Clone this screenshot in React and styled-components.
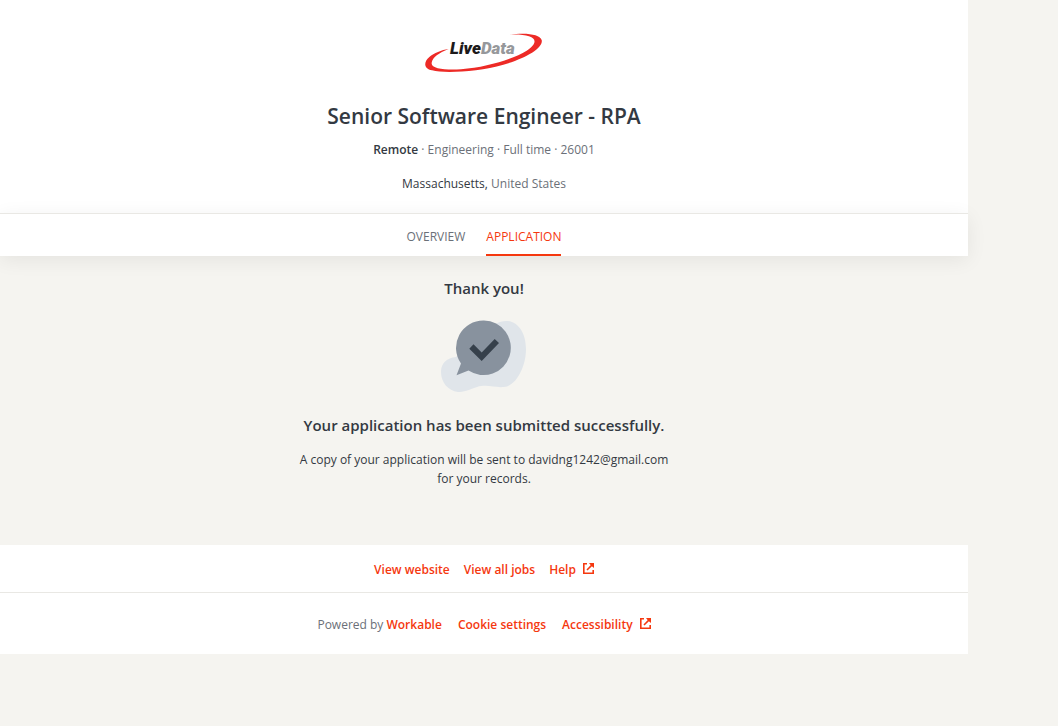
import React from 'react';
import styled, {createGlobalStyle, css} from 'styled-components';

const colors = {
    page: '#f5f4f0',
    surface: '#ffffff',
    text: '#333942',
    muted: '#6b7078',
    accent: '#f5380f',
    line: '#e9e8e4'
};

const GlobalStyle = createGlobalStyle`
    * {
        box-sizing: border-box;
    }

    body {
        margin: 0;
        background: ${colors.page};
        color: ${colors.text};
        font-family: "Segoe UI", "Open Sans", "Noto Sans", sans-serif;
        font-size: 12px;
        line-height: 19px;
    }
`;

const Page = styled.div`
    padding-right: 90px;
    text-align: center;
`;

const Header = styled.header`
    display: flex;
    flex-direction: column;
    align-items: center;
    padding: 31px 16px 20px;
    background: ${colors.surface};
`;

const JobTitle = styled.h1`
    margin: 28px 0 0;
    font-size: 21px;
    font-weight: 600;
    line-height: 30px;
`;

const Meta = styled.p`
    margin: ${props => props.$spaced ? '15px' : '9px'} 0 0;
    color: ${colors.muted};

    strong {
        color: ${colors.text};
        font-weight: 600;
    }

    span {
        color: ${colors.text};
    }
`;

const Tabs = styled.nav`
    position: relative;
    display: flex;
    justify-content: center;
    gap: 21px;
    background: ${colors.surface};
    border-top: 1px solid ${colors.line};
    box-shadow: 0 4px 20px rgba(0, 0, 0, 0.07);
`;

const Tab = styled.a`
    padding: 13px 0 8px;
    border-bottom: 2px solid transparent;
    color: ${colors.muted};
    font-weight: 500;
    text-decoration: none;
    text-transform: uppercase;

    ${props => props.$active && css`
        color: ${colors.accent};
        border-bottom-color: ${colors.accent};
    `}
`;

const Confirmation = styled.main`
    display: flex;
    flex-direction: column;
    align-items: center;
    padding: 22px 16px 57px;
`;

const Heading = styled.h2`
    margin: 0;
    font-size: 15px;
    font-weight: 600;
    line-height: 20px;
`;

const Message = styled.p`
    max-width: 376px;
    margin: 15px 0 0;
`;

const Bubble = styled.svg`
    width: 86px;
    height: 73px;
    margin: 22px 0;
`;

const FooterRow = styled.div`
    display: flex;
    justify-content: center;
    gap: ${props => props.$last ? '16px' : '14px'};
    padding: ${props => props.$last ? '22px 16px 20px' : '15px 16px 13px'};
    background: ${colors.surface};
    color: ${colors.muted};

    & + & {
        border-top: 1px solid ${colors.line};
    }
`;

const FooterLink = styled.a`
    color: ${colors.accent};
    font-weight: 600;
    text-decoration: none;

    svg {
        margin-left: 7px;
    }
`;

const Logo = () => (
    <svg width="118" height="42" viewBox="45 33 354 126" role="img" aria-label="LiveData">
        <path
            fill="#ed2a26"
            d="M298 44C350 37 389 43 395 60C401 83 348 115 280 134C205 155 105 161 66 151C41 145 40 127 58 111C72 99 94 90 116 87C86 99 68 112 65 128C62 147 104 150 153 148C230 142 308 118 350 92C378 73 382 57 357 49C343 44 322 43 298 44Z"
        />
        <text
            x="120"
            y="103"
            fontFamily="Roboto, 'Liberation Sans', sans-serif"
            fontSize="51"
            fontWeight="900"
            fontStyle="italic"
        >
            <tspan fill="#1c1a1b">Live</tspan>
            <tspan fill="#96989b">Data</tspan>
        </text>
    </svg>
);

const ExternalIcon = () => (
    <svg width="11" height="11" viewBox="0 0 11 11" fill="none" stroke="currentColor" strokeWidth="1.6" aria-hidden="true">
        <path d="M4 .8H.8V10.2H10.2V7"/>
        <path d="M4 7L9.6 1.4"/>
        <path fill="currentColor" stroke="none" d="M6 0H11V5L9.2 3.6L7.4 1.8Z"/>
    </svg>
);

const SuccessBubble = () => (
    <Bubble viewBox="0 0 86 73" aria-hidden="true">
        <path
            fill="#e0e5ea"
            d="M65 1C77 1 85 13 85 29C85 47 75 66 63 67C54 68 46 64 36 67C28 70 22 72 17 72C7 71 0 62 0 52C0 43 6 38 15 37L45 10C52 5 58 1 65 1Z"
        />
        <path
            fill="#88929e"
            d="M43 .5A27.3 27.3 0 1 1 27.5 50.6L15.5 55.3L20 43.5A27.3 27.3 0 0 1 43 .5Z"
        />
        <path fill="#36404b" d="M28.3 28.7L32.5 24.3L40.7 32.6L53.7 19L58 23L40.7 41Z"/>
    </Bubble>
);

export default function App() {
    return (
        <>
            <GlobalStyle/>
            <Page>
                <Header>
                    <Logo/>
                    <JobTitle>Senior Software Engineer - RPA</JobTitle>
                    <Meta><strong>Remote</strong> · Engineering · Full time · 26001</Meta>
                    <Meta $spaced><span>Massachusetts,</span> United States</Meta>
                </Header>
                <Tabs>
                    <Tab href="#overview">Overview</Tab>
                    <Tab href="#application" $active aria-current="page">Application</Tab>
                </Tabs>
                <Confirmation>
                    <Heading>Thank you!</Heading>
                    <SuccessBubble/>
                    <Heading>Your application has been submitted successfully.</Heading>
                    <Message>
                        A copy of your application will be sent to davidng1242@gmail.com for your records.
                    </Message>
                </Confirmation>
                <footer>
                    <FooterRow>
                        <FooterLink href="#website">View website</FooterLink>
                        <FooterLink href="#jobs">View all jobs</FooterLink>
                        <FooterLink href="#help">Help<ExternalIcon/></FooterLink>
                    </FooterRow>
                    <FooterRow $last>
                        <span>Powered by <FooterLink href="#workable">Workable</FooterLink></span>
                        <FooterLink href="#cookies">Cookie settings</FooterLink>
                        <FooterLink href="#accessibility">Accessibility<ExternalIcon/></FooterLink>
                    </FooterRow>
                </footer>
            </Page>
        </>
    );
}
